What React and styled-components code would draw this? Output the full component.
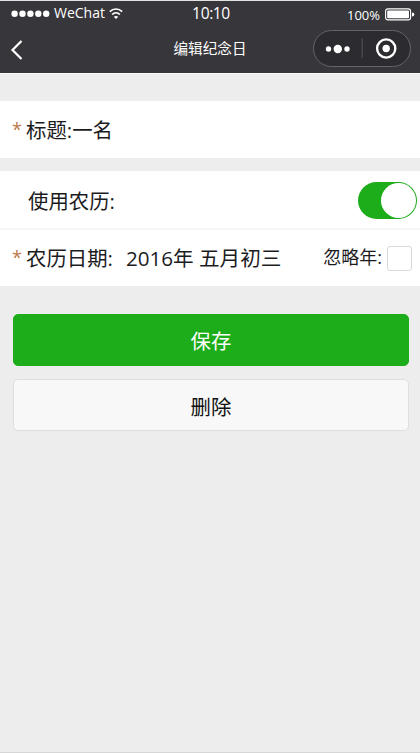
import React from "react";
import styled, { createGlobalStyle } from "styled-components";

const GlobalStyle = createGlobalStyle`
  * { box-sizing: border-box; }
  body { margin: 0; background: #ededed; }
`;

const Screen = styled.div`
  display: flex;
  flex-direction: column;
  width: 420px;
  height: 753px;
  overflow: hidden;
  background: #ededed;
  border-top: 1px solid #dfe3e1;
  border-bottom: 1px solid #d6d6d6;
  color: #1c1c1e;
  font-family: "Open Sans", "Noto Sans CJK SC", sans-serif;
`;

const Header = styled.header`
  height: 73px;
  background: #37363b;
  border-bottom: 1px solid #fafafa;
  color: #fff;
`;

const StatusBar = styled.div`
  display: grid;
  grid-template-columns: 1fr 60px 1fr;
  align-items: center;
  height: 24px;
  padding: 0 5px 0 11px;
`;

const Carrier = styled.div`
  display: flex;
  align-items: center;
  gap: 4px;
  font-size: 14px;
  line-height: 20px;
`;

const Clock = styled.div`
  margin-left: -4px;
  text-align: center;
  font-size: 15.6px;
  letter-spacing: -0.4px;
  line-height: 20px;
`;

const Power = styled.div`
  display: flex;
  align-items: center;
  justify-content: flex-end;
  gap: 5px;
  padding-top: 3px;
  font-size: 13px;
  line-height: 20px;
`;

const NavBar = styled.div`
  display: grid;
  grid-template-columns: 97px 1fr 107px;
  align-items: center;
  height: 46px;
  padding: 0 0 0 10px;
`;

const BackIcon = styled.svg`
  display: block;
  margin-top: 4px;
`;

const NavTitle = styled.h1`
  margin: 0;
  text-align: center;
  font-size: 14.6px;
  font-weight: 400;
  line-height: 20px;
`;

const Capsule = styled.div`
  display: flex;
  align-items: center;
  width: 98px;
  height: 37px;
  border: 1px solid #656469;
  border-radius: 18.5px;
  background: #2c2b30;
`;

const Group = styled.section`
  margin-top: ${(p) => p.$gap}px;
  background: #fff;
`;

const Row = styled.div`
  display: flex;
  align-items: center;
  height: ${(p) => p.$height}px;
  padding: 0 3px 0 ${(p) => (p.$required ? 11 : 28)}px;
  border-bottom: ${(p) => (p.$divided ? "2px solid #f6f6f6" : "none")};
  font-size: 20.4px;
  line-height: 28px;
  white-space: nowrap;
`;

const Label = styled.span`
  padding-top: ${(p) => p.$drop || 0}px;
`;

const Star = styled.span`
  width: 15px;
  padding: 0 0 2px 1px;
  color: #bd7a4c;
  font-size: 18px;
`;

const DateValue = styled.span`
  margin-left: 13px;
  font-size: 20.6px;
`;

const Switch = styled.button`
  display: flex;
  justify-content: flex-end;
  width: 59px;
  height: 37px;
  margin: 1px 0 0 auto;
  padding: 1px;
  border: 0;
  border-radius: 18.5px;
  background: #1dac1a;
`;

const Knob = styled.span`
  width: 35px;
  height: 35px;
  border-radius: 50%;
  background: #fff;
`;

const IgnoreYear = styled.label`
  display: flex;
  align-items: center;
  gap: 5px;
  margin-left: auto;
  padding-right: 5px;
  font-size: 18px;
`;

const IgnoreText = styled.span`
  padding-bottom: 2px;
`;

const CheckBox = styled.span`
  width: 25px;
  height: 25px;
  margin-top: 1px;
  border: 1px solid #d9d9d9;
  border-radius: 3px;
  background: #fff;
`;

const Actions = styled.div`
  display: flex;
  flex-direction: column;
  gap: 13px;
  padding: 28px 11px 0 13px;
`;

const Button = styled.button`
  height: 52px;
  padding: ${(p) => (p.$primary ? 1 : 3)}px 0 0;
  border: 1px solid ${(p) => (p.$primary ? "#1dac1a" : "#dedede")};
  border-radius: 5px;
  background: ${(p) => (p.$primary ? "#1dac1a" : "#f8f8f8")};
  color: ${(p) => (p.$primary ? "#fff" : "#111")};
  font-family: inherit;
  font-size: 20.4px;
  line-height: 28px;
`;

const SignalDots = () => (
  <svg width="39" height="8" viewBox="0 0 39 8" fill="#fff">
    {[3.6, 11.5, 19.4, 27.3, 35.2].map((x) => (
      <circle key={x} cx={x} cy="4.7" r="3.2" />
    ))}
  </svg>
);

const Wifi = () => (
  <svg width="14" height="12" viewBox="0 0 14 12" fill="none" stroke="#fff" strokeWidth="1.7">
    <path d="M.8 4.6C4.4 1.1 9.6 1.1 13.2 4.6" />
    <path d="M3.1 7.5C5.4 5.3 8.6 5.3 10.9 7.5" />
    <path d="M7 12 4.8 9.8Q7 8 9.2 9.8Z" fill="#fff" stroke="none" />
  </svg>
);

const Battery = () => (
  <svg width="30" height="13" viewBox="0 0 30 13">
    <rect x=".6" y=".9" width="25" height="11" rx="2.4" fill="none" stroke="#fff" strokeWidth="1.1" />
    <rect x="2.2" y="2.5" width="21.8" height="7.8" rx="1" fill="#fff" />
    <path d="M27 4.4Q29.3 4.6 29.3 6.4T27 8.4Z" fill="#fff" />
  </svg>
);

const CapsuleIcons = () => (
  <svg width="96" height="35" viewBox="0 0 96 35">
    <g fill="#fff">
      <circle cx="14.5" cy="18" r="2.7" />
      <circle cx="23.8" cy="18" r="4.2" />
      <circle cx="33" cy="18" r="2.7" />
      <circle cx="72.2" cy="17.5" r="3.7" />
    </g>
    <path d="M48.2 7.5V27" stroke="#58575b" />
    <circle cx="72.2" cy="17.5" r="9.1" fill="none" stroke="#fff" strokeWidth="2.4" />
  </svg>
);

export default function App() {
  return (
    <Screen>
      <GlobalStyle />
      <Header>
        <StatusBar>
          <Carrier>
            <SignalDots />
            <span>WeChat</span>
            <Wifi />
          </Carrier>
          <Clock>10:10</Clock>
          <Power>
            <span>100%</span>
            <Battery />
          </Power>
        </StatusBar>
        <NavBar>
          <BackIcon width="14" height="20" viewBox="0 0 14 20" fill="none" stroke="#fff" strokeWidth="2.2">
            <path d="M11.5 1 2.5 10l9 9" />
          </BackIcon>
          <NavTitle>编辑纪念日</NavTitle>
          <Capsule>
            <CapsuleIcons />
          </Capsule>
        </NavBar>
      </Header>
      <Group $gap={27}>
        <Row $required $height={57}>
          <Star>*</Star>
          <Label>标题:一名</Label>
        </Row>
      </Group>
      <Group $gap={13}>
        <Row $height={59} $divided>
          <Label $drop={2}>使用农历:</Label>
          <Switch role="switch" aria-checked="true" aria-label="使用农历">
            <Knob />
          </Switch>
        </Row>
        <Row $required $height={56}>
          <Star>*</Star>
          <Label>农历日期:</Label>
          <DateValue>2016年 五月初三</DateValue>
          <IgnoreYear>
            <IgnoreText>忽略年:</IgnoreText>
            <CheckBox />
          </IgnoreYear>
        </Row>
      </Group>
      <Actions>
        <Button $primary>保存</Button>
        <Button>删除</Button>
      </Actions>
    </Screen>
  );
}
